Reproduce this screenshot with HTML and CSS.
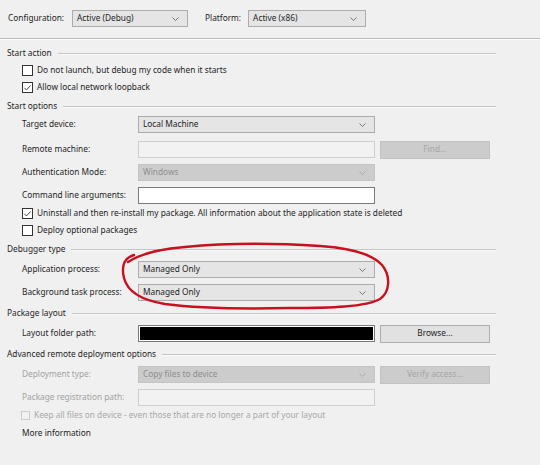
FILE: index.html
```html
<!DOCTYPE html>
<html lang="en">
<head>
<meta charset="utf-8">
<title>Debug</title>
<link rel="stylesheet" href="styles.css">
</head>
<body>
<div class="page">
  <div class="toolbar">
    <span class="tb-label">Configuration:</span>
    <div class="combo combo-config"><span>Active (Debug)</span><svg class="chev" width="7" height="4" viewBox="0 0 7 4"><path d="M0.5 0.5 L3.5 3.5 L6.5 0.5"/></svg></div>
    <span class="tb-label tb-platform">Platform:</span>
    <div class="combo combo-platform"><span>Active (x86)</span><svg class="chev" width="7" height="4" viewBox="0 0 7 4"><path d="M0.5 0.5 L3.5 3.5 L6.5 0.5"/></svg></div>
  </div>
  <div class="sep"></div>

  <div class="content">
    <div class="head"><span>Start action</span></div>
    <div class="check"><span class="box"></span><span>Do not launch, but debug my code when it starts</span></div>
    <div class="check"><span class="box"><svg width="10" height="10" viewBox="0 0 10 10"><path d="M1.5 4.8 L3.8 7.2 L8.4 2.2"/></svg></span><span>Allow local network loopback</span></div>

    <div class="head"><span>Start options</span></div>
    <div class="row first">
      <span class="label">Target device:</span>
      <div class="combo field"><span>Local Machine</span><svg class="chev" width="7" height="4" viewBox="0 0 7 4"><path d="M0.5 0.5 L3.5 3.5 L6.5 0.5"/></svg></div>
    </div>
    <div class="row">
      <span class="label">Remote machine:</span>
      <div class="input field disabled"></div>
      <div class="button disabled">Find...</div>
    </div>
    <div class="row">
      <span class="label">Authentication Mode:</span>
      <div class="combo field disabled"><span>Windows</span><svg class="chev" width="7" height="4" viewBox="0 0 7 4"><path d="M0.5 0.5 L3.5 3.5 L6.5 0.5"/></svg></div>
    </div>
    <div class="row">
      <span class="label">Command line arguments:</span>
      <div class="input field"></div>
    </div>
    <div class="check"><span class="box"><svg width="10" height="10" viewBox="0 0 10 10"><path d="M1.5 4.8 L3.8 7.2 L8.4 2.2"/></svg></span><span>Uninstall and then re-install my package. All information about the application state is deleted</span></div>
    <div class="check"><span class="box"></span><span>Deploy optional packages</span></div>

    <div class="head"><span>Debugger type</span></div>
    <div class="row">
      <span class="label">Application process:</span>
      <div class="combo field"><span>Managed Only</span><svg class="chev" width="7" height="4" viewBox="0 0 7 4"><path d="M0.5 0.5 L3.5 3.5 L6.5 0.5"/></svg></div>
    </div>
    <div class="row">
      <span class="label">Background task process:</span>
      <div class="combo field"><span>Managed Only</span><svg class="chev" width="7" height="4" viewBox="0 0 7 4"><path d="M0.5 0.5 L3.5 3.5 L6.5 0.5"/></svg></div>
    </div>

    <div class="head"><span>Package layout</span></div>
    <div class="row">
      <span class="label">Layout folder path:</span>
      <div class="input field filled"></div>
      <div class="button">Browse...</div>
    </div>

    <div class="head"><span>Advanced remote deployment options</span></div>
    <div class="row">
      <span class="label muted">Deployment type:</span>
      <div class="combo field disabled"><span>Copy files to device</span><svg class="chev" width="7" height="4" viewBox="0 0 7 4"><path d="M0.5 0.5 L3.5 3.5 L6.5 0.5"/></svg></div>
      <div class="button disabled">Verify access...</div>
    </div>
    <div class="row">
      <span class="label muted">Package registration path:</span>
      <div class="input field disabled"></div>
    </div>
    <div class="check check-off"><span class="box"></span><span>Keep all files on device - even those that are no longer a part of your layout</span></div>
    <div class="more">More information</div>
  </div>

  <svg class="mark" width="540" height="465" viewBox="0 0 540 465">
    <path d="M128 262 C140 254 160 249 185 247 C225 243 275 243 320 246 C350 248 372 254 382 265 C391 276 390 292 380 299 C366 307 330 308 290 308 C245 309 195 308 165 304 C140 300 127 290 124 278 C122 270 123 264 126 260 C128 257 131 256 134 255"/>
  </svg>
</div>
</body>
</html>
```

FILE: styles.css
```css
* { box-sizing: border-box; }

html, body {
  margin: 0;
  padding: 0;
  background: #f0f0f0;
}

body {
  font-family: "Noto Sans", "Open Sans", sans-serif;
  font-size: 8.3px;
  color: #1e1e1e;
  line-height: 1;
}

.page {
  position: relative;
  width: 540px;
  height: 465px;
  overflow: hidden;
}

/* top configuration bar */
.toolbar {
  display: flex;
  align-items: center;
  height: 38px;
  padding: 10px 0 11px 8px;
}

.tb-label {
  width: 64px;
}

.tb-platform {
  width: auto;
  margin-left: 17px;
  margin-right: 7px;
}

.combo-config { width: 116px; }
.combo-platform { width: 118px; }

.sep {
  height: 2px;
  border-top: 1px solid #b9b9b9;
  border-bottom: 1px solid #fbfbfb;
}

/* property groups */
.content {
  display: flex;
  flex-direction: column;
  padding: 0 44px 0 7px;
}

.head {
  display: flex;
  align-items: center;
  height: 14px;
  margin-top: 5px;
}

.head:first-child { margin-top: 6px; }

.head::after {
  content: "";
  flex: 1;
  height: 1px;
  margin-left: 6px;
  background: #c4c4c4;
  box-shadow: 0 1px 0 #fafafa;
}

.row {
  display: flex;
  align-items: center;
  height: 17px;
  padding-left: 15px;
  margin-top: 6px;
}

.head + .row { margin-top: 5px; }
.head + .row.first { margin-top: 3px; }
.row.first + .row { margin-top: 8px; }

.label {
  width: 116px;
  flex: none;
}

.label.muted { color: #a2a2a2; }

.field {
  width: 237px;
  height: 17px;
  flex: none;
}

.combo {
  display: flex;
  align-items: center;
  justify-content: space-between;
  height: 17px;
  padding: 0 8px 0 4px;
  background: #e5e5e5;
  border: 1px solid #acacac;
}

.chev {
  flex: none;
}

.chev path {
  fill: none;
  stroke: #6a6a6a;
  stroke-width: 0.9;
}

.combo.disabled {
  background: #cccccc;
  border-color: #c4c4c4;
  color: #8e8e8e;
}

.combo.disabled .chev path { stroke: #a8a8a8; }

.input {
  background: #ffffff;
  border: 1px solid #7a7a7a;
}

.input.disabled {
  background: #f2f2f2;
  border-color: #cfcfcf;
}

.input.filled {
  background: #000000;
  box-shadow: inset 0 0 0 1px #ffffff;
}

.button {
  display: flex;
  align-items: center;
  justify-content: center;
  width: 110px;
  height: 18px;
  margin-left: 5px;
  background: #e1e1e1;
  border: 1px solid #adadad;
}

.button.disabled {
  background: #cccccc;
  border-color: #c2c2c2;
  color: #a6a6a6;
}

/* checkboxes */
.check {
  display: flex;
  align-items: center;
  height: 14px;
  padding-left: 15px;
  margin-top: 4px;
}

.head + .check { margin-top: 3px; }
.row + .check { margin-top: 2px; }
.check + .check { margin-top: 3px; }

.box {
  display: flex;
  width: 11px;
  height: 11px;
  margin-right: 4px;
  background: #ffffff;
  border: 1px solid #333333;
  flex: none;
}

.box svg path {
  fill: none;
  stroke: #333333;
  stroke-width: 1;
}

.check-off {
  padding-left: 14px;
  color: #a8a8a8;
}

.check-off .box {
  width: 9px;
  height: 9px;
  margin-right: 4px;
  border-color: #cccccc;
  background: #f2f2f2;
}

.more {
  height: 14px;
  padding-left: 15px;
  margin-top: 4px;
  display: flex;
  align-items: center;
}

/* hand-drawn annotation over the debugger fields */
.mark {
  position: absolute;
  left: 0;
  top: 0;
  pointer-events: none;
}

.mark path {
  fill: none;
  stroke: #c8101e;
  stroke-width: 2.4;
  stroke-linecap: round;
  stroke-linejoin: round;
}
```
